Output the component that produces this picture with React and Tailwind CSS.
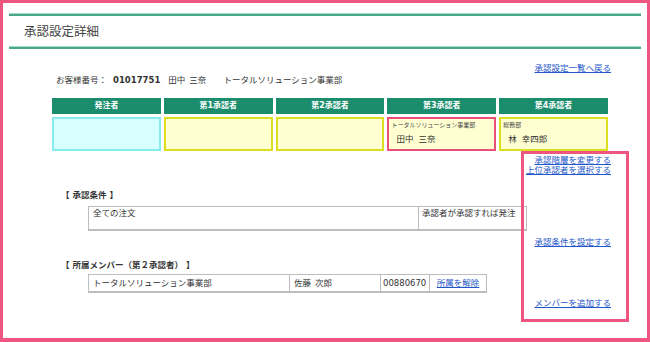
const link = "text-[#2356c8] underline underline-offset-[1px] decoration-[0.5px]";

const approvers = [
  { label: "発注者", tone: "cyan" },
  { label: "第1承認者", tone: "yellow" },
  { label: "第2承認者", tone: "yellow" },
  { label: "第3承認者", tone: "pink", dept: "トータルソリューション事業部", first: "田中", last: "三奈" },
  { label: "第4承認者", tone: "yellow", dept: "総務部", first: "林", last: "幸四郎" },
];

const tones = {
  cyan: "bg-[#d8ffff] border-[#86eded]",
  yellow: "bg-[#ffffd2] border-[#dede20]",
  pink: "bg-[#ffffd2] border-[#ea4f7c]",
};

function GreenRule() {
  return <div className="h-[3px] bg-[#4aa886] border-t border-[#a4dcc8]" />;
}

function ApproverGrid() {
  return (
    <div className="mt-[12px] grid grid-cols-5 gap-x-[3px] gap-y-[3px] w-[556px]">
      {approvers.map((a) => (
        <div
          key={a.label}
          className="h-[16px] bg-[#1b8d6c] text-white font-bold text-[8px] flex items-center justify-center"
        >
          {a.label}
        </div>
      ))}
      {approvers.map((a) => (
        <div key={a.label + "-cell"} className={`h-[34px] border-2 ${tones[a.tone]}`}>
          {a.dept && (
            <>
              <div className="pt-[2px] pl-[2px] text-[6px] leading-[8px] text-[#444]">{a.dept}</div>
              <div className="mt-[4px] pl-[7px] flex gap-[5px]">
                <span>{a.first}</span>
                <span>{a.last}</span>
              </div>
            </>
          )}
        </div>
      ))}
    </div>
  );
}

export default function App() {
  return (
    <div className="w-[650px] h-[342px] bg-white border-[3px] border-b-4 border-[#ee5580] relative font-['DejaVu_Sans','Noto_Sans_CJK_JP',sans-serif] text-[8.5px] leading-[12px] text-[#333]">
      <div className="px-[6px] pt-[10px]">
        <GreenRule />
        <h1 className="h-[30px] flex items-center pl-[15px] text-[12.5px] text-[#444] font-['Noto_Sans_CJK_JP',sans-serif]">
          承認設定詳細
        </h1>
        <GreenRule />
      </div>

      <div className="pl-[49px] w-[608px]">
        <div className="mt-[13px] flex justify-end">
          <a href="#" className={link}>承認設定一覧へ戻る</a>
        </div>

        <div className="pl-[4px] flex items-center">
          <span>お客様番号：</span>
          <span className="ml-[6px] font-bold">01017751</span>
          <span className="ml-[8px]">田中</span>
          <span className="ml-[4px]">三奈</span>
          <span className="ml-[17px]">トータルソリューション事業部</span>
        </div>

        <ApproverGrid />

        <div className="mt-[4px] flex flex-col items-end leading-[10px]">
          <a href="#" className={link}>承認階層を変更する</a>
          <a href="#" className={link}>上位承認者を選択する</a>
        </div>

        <div className="mt-[14px] pl-[9px] font-bold">【 承認条件 】</div>
        <div className="mt-[5px] ml-[36px] w-[439px] h-[25px] flex border border-[#bdbdbd] border-b-2">
          <div className="w-[329px] pl-[4px]">全ての注文</div>
          <div className="flex-1 pl-[3px] border-l border-[#bdbdbd]">承認者が承認すれば発注</div>
        </div>
        <div className="mt-[5px] flex justify-end">
          <a href="#" className={link}>承認条件を設定する</a>
        </div>

        <div className="mt-[11px] pl-[9px] font-bold">【 所属メンバー（第２承認者） 】</div>
        <div className="mt-[3px] ml-[36px] w-[399px] h-[19px] flex border border-[#bdbdbd] border-b-2">
          <div className="w-[200px] pl-[4px] flex items-center">トータルソリューション事業部</div>
          <div className="w-[91px] pl-[4px] flex items-center gap-[4px] border-l border-[#bdbdbd]">
            <span>佐藤</span>
            <span>次郎</span>
          </div>
          <div className="w-[49px] pl-[2px] flex items-center border-l border-[#bdbdbd]">00880670</div>
          <div className="flex-1 flex items-center justify-center border-l border-[#bdbdbd]">
            <a href="#" className={link}>所属を解除</a>
          </div>
        </div>
        <div className="mt-[4px] flex justify-end">
          <a href="#" className={link}>メンバーを追加する</a>
        </div>
      </div>

      <div className="absolute left-[518px] top-[148px] w-[108px] h-[171px] border-[3px] border-[#ee5580] pointer-events-none" />
    </div>
  );
}
